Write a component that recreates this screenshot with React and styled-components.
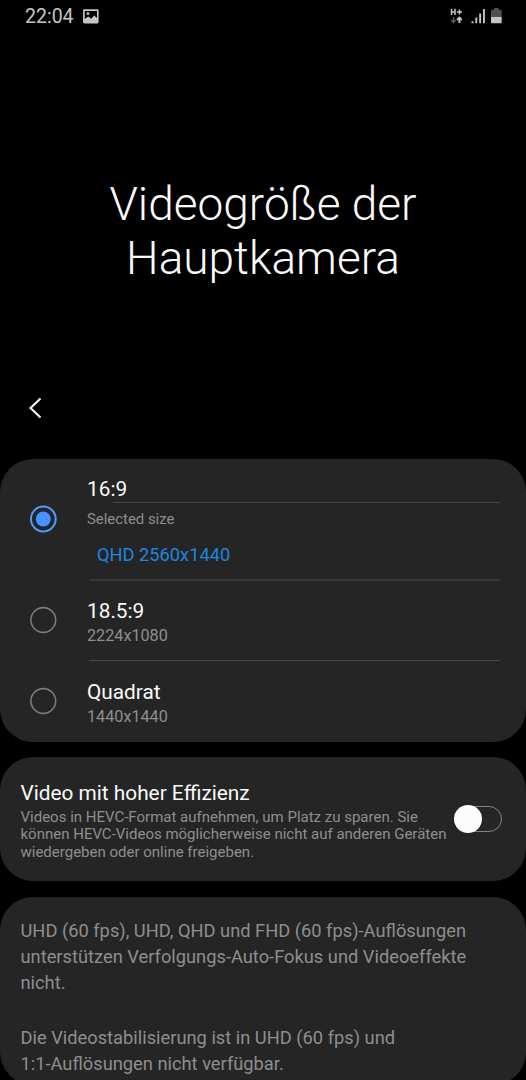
import styled, { createGlobalStyle } from "styled-components";

const GlobalStyle = createGlobalStyle`
  * {
    box-sizing: border-box;
  }
  body {
    margin: 0;
    background-color: #000;
    font-family: Roboto, sans-serif;
    overflow: hidden;
  }
`;

const Screen = styled.div`
  width: 526px;
  height: 1080px;
  overflow: hidden;
  display: flex;
  flex-direction: column;
  background-color: #000;
  color: #fafafa;
`;

const StatusBar = styled.header`
  flex: none;
  height: 32px;
  padding: 0 24px 0 25px;
  display: flex;
  align-items: center;
  justify-content: space-between;
  color: #c4c4c4;
`;

const StatusGroup = styled.div`
  display: flex;
  align-items: center;
  gap: ${({ gap }) => gap}px;
`;

const Clock = styled.span`
  padding-top: 1px;
  font-size: 19.5px;
  line-height: 31px;
`;

const Hero = styled.div`
  flex: none;
  height: 346px;
  padding-top: 145px;
`;

const Title = styled.h1`
  margin: 0;
  font-size: 46px;
  font-weight: 300;
  line-height: 54px;
  text-align: center;
`;

const Toolbar = styled.nav`
  flex: none;
  height: 81px;
  padding: 18px 0 0 27px;
`;

const BackButton = styled.button`
  display: block;
  padding: 0;
  border: 0;
  background: none;
  color: #fafafa;
  line-height: 0;
`;

const Cards = styled.main`
  display: flex;
  flex-direction: column;
  gap: 15.5px;
`;

const Card = styled.section`
  flex: none;
  height: ${({ height }) => height}px;
  border-radius: 33px;
  background-color: #252525;
`;

const Option = styled.div`
  height: ${({ height }) => height}px;
  padding-left: 30px;
  display: grid;
  grid-template-columns: 57px 1fr;
  align-items: start;
`;

const RadioSlot = styled.span`
  height: ${({ height }) => height}px;
  display: flex;
  align-items: center;
`;

const OptionText = styled.div`
  padding-top: ${({ top }) => top}px;
  display: flex;
  flex-direction: column;
  align-items: flex-start;
`;

const Label = styled.div`
  font-size: 20.8px;
  line-height: 26px;
`;

const Hint = styled.div`
  font-size: ${({ small }) => (small ? "14.9px" : "16.2px")};
  line-height: 24px;
  color: #8e8e8e;
`;

const Rule = styled.hr`
  width: ${({ width }) => width}px;
  height: ${({ soft }) => (soft ? "2px" : "1px")};
  margin: 0 26px 0 auto;
  border: 0;
  background-color: ${({ soft }) => (soft ? "#383838" : "#444")};
`;

const SizeValue = styled.div`
  padding: 11px 0 0 10px;
  font-size: 18.25px;
  line-height: 26px;
  color: #1c86e0;
`;

const SelectedSize = styled.div`
  padding-top: 4px;
`;

const SwitchRow = styled.div`
  height: 100%;
  padding: 23px 24px 0 20.5px;
  display: flex;
  justify-content: space-between;
`;

const Description = styled.p`
  margin: 0;
  padding-top: 2.5px;
  font-size: 15px;
  line-height: 17.5px;
  color: #8e8e8e;
  white-space: nowrap;
`;

const Switch = styled.div`
  flex: none;
  width: 47px;
  height: 26px;
  margin-top: 26px;
  border: 1px solid #858585;
  border-radius: 13px;
  display: flex;
  align-items: center;
`;

const Knob = styled.span`
  flex: none;
  width: 28px;
  height: 28px;
  margin-left: -2px;
  border-radius: 50%;
  background-color: #fcfcfc;
`;

const Notes = styled.div`
  padding: 21px 0 0 20.5px;
  display: grid;
  gap: 29px;
`;

const Note = styled.p`
  margin: 0;
  font-size: 18.3px;
  line-height: 26px;
  color: #8e8e8e;
  white-space: nowrap;
`;

const PictureIcon = () => (
  <svg width="16" height="15" viewBox="0 0 16 15">
    <path
      fillRule="evenodd"
      fill="currentColor"
      d="M1.300 0.300h13Q15.600 0.300 15.600 1.600v11.500q0 1.300-1.300 1.300h-13Q0 14.400 0 13.100V1.600Q0 0.300 1.300 0.300zM1.700 2v8l3.500-2.500 3 2.300 3-3.300 2.800 2.500V2z"
    />
    <circle cx="5" cy="4.700" r="1.400" fill="currentColor" />
  </svg>
);

const DataIcon = () => (
  <svg width="12" height="16" viewBox="0 0 12 16" fill="none" stroke="currentColor">
    <path d="M1.500 0.800v6.200M5 0.800v6.200M1.500 4H5M6.800 4H12M9.500 1.500v5" strokeWidth="1.500" />
    <path d="M3.500 9v5.300M1.300 12l2.200 2.300L5.700 12" stroke="#5c5c5c" strokeWidth="1.500" />
    <path d="M9.400 15V9.700M7 12l2.400-2.400L11.800 12" strokeWidth="1.900" />
  </svg>
);

const SignalIcon = () => (
  <svg width="15" height="15" viewBox="0 0 15 15" fill="currentColor">
    <path d="M0.500 12.200h2v2h-2zM4.300 8.500h1.900v5.700H4.300zM8.200 4.500h1.900v9.700H8.200zM12 0h1.900v14.200H12z" />
  </svg>
);

const BatteryIcon = () => (
  <svg width="11" height="16" viewBox="0 0 11 16">
    <path d="M3 0h4.700v1.800h2q1 0 1 1V9H0V2.800q0-1 1-1h2z" fill="#505050" />
    <path d="M0 9h10.700v5.200q0 1-1 1H1q-1 0-1-1z" fill="currentColor" />
  </svg>
);

const BackIcon = () => (
  <svg width="16" height="24" viewBox="0 0 16 24">
    <path d="M13.500 2.500L3.500 12l10 9.500" fill="none" stroke="currentColor" strokeWidth="2.100" />
  </svg>
);

const Radio = ({ checked }) => (
  <svg width="28" height="28" viewBox="0 0 28 28" role="radio" aria-checked={!!checked}>
    <circle
      cx="13.300"
      cy="14"
      r="12.400"
      fill={checked ? "#1d2734" : "none"}
      stroke={checked ? "#5b97ec" : "#7c7c7c"}
      strokeWidth={checked ? 2 : 1.6}
    />
    {checked && <circle cx="13.300" cy="14" r="7.500" fill="#4693ff" />}
  </svg>
);

export default function App() {
  return (
    <>
      <GlobalStyle />
      <Screen>
        <StatusBar>
          <StatusGroup gap={9}>
            <Clock>22:04</Clock>
            <PictureIcon />
          </StatusGroup>
          <StatusGroup gap={9}>
            <DataIcon />
            <StatusGroup gap={5}>
              <SignalIcon />
              <BatteryIcon />
            </StatusGroup>
          </StatusGroup>
        </StatusBar>
        <Hero>
          <Title>
            Videogröße der
            <br />
            Hauptkamera
          </Title>
        </Hero>
        <Toolbar>
          <BackButton aria-label="Zurück">
            <BackIcon />
          </BackButton>
        </Toolbar>
        <Cards>
          <Card height={282.5}>
            <Option height={120}>
              <RadioSlot height={120}>
                <Radio checked />
              </RadioSlot>
              <OptionText top={17}>
                <Label>16:9</Label>
                <Rule width={387} />
                <SelectedSize>
                  <Hint small>Selected size</Hint>
                  <SizeValue>QHD 2560x1440</SizeValue>
                </SelectedSize>
              </OptionText>
            </Option>
            <Rule width={411} soft />
            <Option height={79}>
              <RadioSlot height={78}>
                <Radio />
              </RadioSlot>
              <OptionText top={17}>
                <Label>18.5:9</Label>
                <Hint>2224x1080</Hint>
              </OptionText>
            </Option>
            <Rule width={411} />
            <Option height={80}>
              <RadioSlot height={80}>
                <Radio />
              </RadioSlot>
              <OptionText top={17.5}>
                <Label>Quadrat</Label>
                <Hint>1440x1440</Hint>
              </OptionText>
            </Option>
          </Card>
          <Card height={124}>
            <SwitchRow>
              <div>
                <Label>Video mit hoher Effizienz</Label>
                <Description>
                  Videos in HEVC-Format aufnehmen, um Platz zu sparen. Sie
                  <br />
                  können HEVC-Videos möglicherweise nicht auf anderen Geräten
                  <br />
                  wiedergeben oder online freigeben.
                </Description>
              </div>
              <Switch role="switch" aria-checked="false">
                <Knob />
              </Switch>
            </SwitchRow>
          </Card>
          <Card height={188}>
            <Notes>
              <Note>
                UHD (60 fps), UHD, QHD und FHD (60 fps)-Auflösungen
                <br />
                unterstützen Verfolgungs-Auto-Fokus und Videoeffekte
                <br />
                nicht.
              </Note>
              <Note>
                Die Videostabilisierung ist in UHD (60 fps) und
                <br />
                1:1-Auflösungen nicht verfügbar.
              </Note>
            </Notes>
          </Card>
        </Cards>
      </Screen>
    </>
  );
}
